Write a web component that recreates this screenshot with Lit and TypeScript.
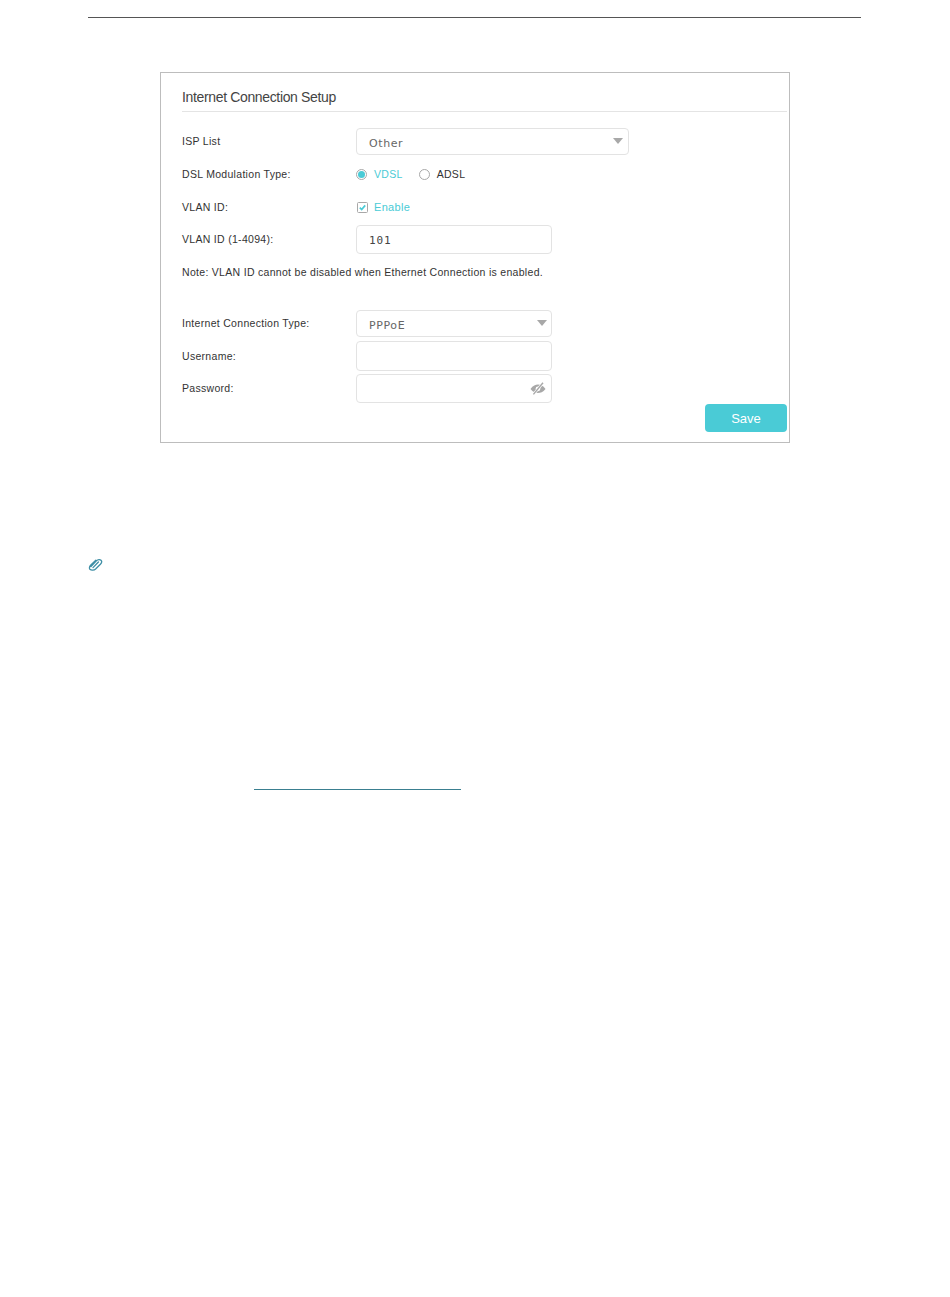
import { LitElement, html, css } from "lit";
import { customElement } from "lit/decorators.js";

@customElement("app-root")
export class AppRoot extends LitElement {
  static styles = css`
    :host { display: block; height: 1297px; background: #fff; font-family: "Liberation Sans", Arial, sans-serif; color: #333; overflow: hidden; }
    .rule { height: 1px; background: #555; margin: 17px 89px 0 88px; }
    .card { box-sizing: border-box; width: 630px; height: 371px; margin: 54px 0 0 160px; border: 1px solid #bdbdbd; padding: 0 2px 0 21px; display: flex; flex-direction: column; }
    .title { height: 39px; box-sizing: border-box; border-bottom: 1px solid #e4e4e4; font-size: 14px; line-height: 48px; color: #444; letter-spacing: -0.35px; flex: none; }
    .row { display: flex; align-items: center; flex: none; font-size: 10.5px; letter-spacing: 0.3px; }
    .label { width: 174px; flex: none; }
    .up { padding-bottom: 2px; }
    .r1 { height: 27px; margin-top: 16px; }
    .r2 { height: 20px; margin-top: 9px; }
    .r3 { height: 20px; margin-top: 13px; }
    .r4 { height: 29px; margin-top: 8px; }
    .r5 { height: 18px; margin-top: 9px; }
    .r6 { height: 27px; margin-top: 29px; }
    .r7 { height: 30px; margin-top: 4px; }
    .r8 { height: 29px; margin-top: 3px; }
    .box { box-sizing: border-box; border: 1px solid #e3e3e3; border-radius: 4px; height: 100%; width: 196px; display: flex; align-items: center; justify-content: space-between; padding: 0 4px 0 12px; font-size: 11px; color: #555; }
    .wide { width: 273px; padding-right: 5px; }
    .val { font-family: "DejaVu Sans", sans-serif; font-size: 11px; letter-spacing: 0.6px; color: #666; padding-top: 3px; }
    .mono { font-family: "DejaVu Sans Mono", monospace; font-size: 11px; color: #444; letter-spacing: 0.9px; padding-top: 1px; }
    .arrow { width: 0; height: 0; border-left: 5.5px solid transparent; border-right: 5.5px solid transparent; border-top: 6px solid #a8a8a8; margin-bottom: 2px; }
    .opt { display: flex; align-items: center; }
    .teal { color: #4acbd6; }
    .radio { box-sizing: border-box; width: 11px; height: 11px; border: 1px solid #a8a8a8; border-radius: 50%; margin-right: 7px; display: flex; align-items: center; justify-content: center; }
    .dot { width: 7px; height: 7px; border-radius: 50%; background: #4acbd6; }
    .o2 { margin-left: 16px; }
    .check { width: 11px; height: 11px; margin: 0 6px 0 1px; flex: none; display: block; }
    .en { font-size: 11px; }
    .eye { width: 16px; height: 13px; display: block; margin-right: 1px; }
    .foot { display: flex; justify-content: flex-end; flex: none; margin-top: 1px; }
    .save { box-sizing: border-box; width: 82px; height: 28px; border-radius: 4px; background: #4acbd6; color: #fff; font-size: 13px; display: flex; align-items: center; justify-content: center; }
    .clip { display: block; width: 15px; height: 13px; margin: 115px 0 0 88px; }
    .link { width: 207px; height: 1px; background: #3a7f90; margin: 218px 0 0 254px; }
  `;

  render() {
    return html`
      <div class="rule"></div>
      <div class="card">
        <div class="title">Internet Connection Setup</div>
        <div class="row r1">
          <div class="label up">ISP List</div>
          <div class="box wide"><span class="val">Other</span><span class="arrow"></span></div>
        </div>
        <div class="row r2">
          <div class="label">DSL Modulation Type:</div>
          <div class="opt teal"><span class="radio"><span class="dot"></span></span>VDSL</div>
          <div class="opt o2"><span class="radio"></span>ADSL</div>
        </div>
        <div class="row r3">
          <div class="label">VLAN ID:</div>
          <div class="opt teal en">
            <svg class="check" viewBox="0 0 11 11"><rect x="0.5" y="0.5" width="10" height="10" rx="1" fill="#fff" stroke="#a8a8a8"/><path d="M2.8 5.6 L4.7 7.5 L8.2 3.4" fill="none" stroke="#4acbd6" stroke-width="1.7"/></svg>Enable
          </div>
        </div>
        <div class="row r4">
          <div class="label up">VLAN ID (1-4094):</div>
          <div class="box"><span class="mono">101</span></div>
        </div>
        <div class="row r5">Note: VLAN ID cannot be disabled when Ethernet Connection is enabled.</div>
        <div class="row r6">
          <div class="label up">Internet Connection Type:</div>
          <div class="box"><span class="val">PPPoE</span><span class="arrow"></span></div>
        </div>
        <div class="row r7">
          <div class="label">Username:</div>
          <div class="box"></div>
        </div>
        <div class="row r8">
          <div class="label up">Password:</div>
          <div class="box">
            <span></span>
            <svg class="eye" viewBox="0 0 16 13"><path d="M0.5 7 C3 3.8 5.5 2.6 8 2.6 C10.5 2.6 13 3.8 15.5 7 C13 10.2 10.5 11 8 11 C5.5 11 3 10.2 0.5 7 Z" fill="#a8a8a8"/><circle cx="8" cy="6.8" r="2.4" fill="#fff"/><path d="M13 0.8 L3.4 12.4" stroke="#fff" stroke-width="2.6"/><path d="M13 0.8 L3.4 12.4" stroke="#a8a8a8" stroke-width="1.4"/></svg>
          </div>
        </div>
        <div class="foot"><div class="save">Save</div></div>
      </div>
      <svg class="clip" viewBox="0 0 15 13"><path d="M3 8.6 L8.6 2.6 C9.8 1.4 12 1.2 13 2.2 C14 3.2 13.6 5 12.4 6.3 L7.6 11 C6.2 12.3 3.4 12.6 2.2 11.6 C1 10.6 1.3 8.6 2.6 7.3 L7.8 2.1 M5 9.6 L10.4 4" fill="none" stroke="#3f8fa6" stroke-width="1.3" stroke-linecap="round"/></svg>
      <div class="link"></div>
    `;
  }
}
